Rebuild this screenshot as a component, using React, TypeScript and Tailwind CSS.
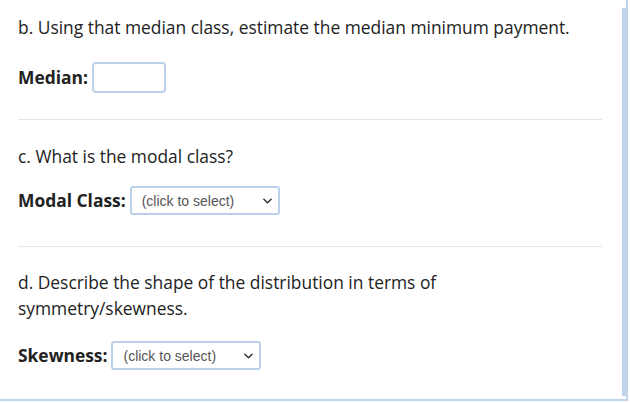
import React from "react";

function Chevron() {
  return (
    <svg
      viewBox="0 0 10 6"
      className="w-[9px] h-[6px]"
      fill="none"
      stroke="#333"
      strokeWidth="1.6"
      strokeLinecap="round"
      strokeLinejoin="round"
    >
      <path d="M1 1l4 4 4-4" />
    </svg>
  );
}

function FakeSelect({ width }: { width: string }) {
  return (
    <div
      className={`${width} h-[29px] border-2 border-[#bcd0ea] rounded-[3px] bg-white flex items-center justify-between pl-[10px] pr-[6px]`}
    >
      <span className="text-[14px] text-[#555] font-['Liberation_Sans',Arial,sans-serif] leading-none">
        (click to select)
      </span>
      <Chevron />
    </div>
  );
}

export default function App() {
  return (
    <div className="w-[630px] h-[403px] bg-white relative overflow-hidden font-['Open_Sans',sans-serif] text-[17.4px] text-[#222]">
      <div className="w-[628px] h-[401px] border-r-2 border-b-2 border-[#bfd3ea] pl-[18px] pr-[26px] pt-[14px]">
        {/* b */}
        <p className="leading-[26px]">
          b. Using that median class, estimate the median minimum payment.
        </p>
        <div className="flex items-center gap-[4px] mt-[22px] h-[31px]">
          <span className="font-bold">Median:</span>
          <div className="w-[74px] h-[31px] border-2 border-[#bcd0ea] rounded-[4px] bg-white" />
        </div>
        <div className="h-px bg-[#e6e6e6] mt-[26px] w-[584px]" />

        {/* c */}
        <p className="leading-[26px] mt-[23px]">c. What is the modal class?</p>
        <div className="flex items-center gap-[4px] mt-[17px] h-[29px]">
          <span className="font-bold">Modal Class:</span>
          <FakeSelect width="w-[150px]" />
        </div>
        <div className="h-px bg-[#e6e6e6] mt-[31px] w-[584px]" />

        {/* d */}
        <p className="leading-[26px] mt-[22px] w-[440px]">
          d. Describe the shape of the distribution in terms of
          symmetry/skewness.
        </p>
        <div className="flex items-center gap-[4px] mt-[20px] h-[29px]">
          <span className="font-bold">Skewness:</span>
          <FakeSelect width="w-[150px]" />
        </div>
      </div>
      {/* scrollbar thumb */}
      <div className="absolute left-[622px] top-[8px] w-[4px] h-[388px] bg-[#bfd3ea]" />
    </div>
  );
}
